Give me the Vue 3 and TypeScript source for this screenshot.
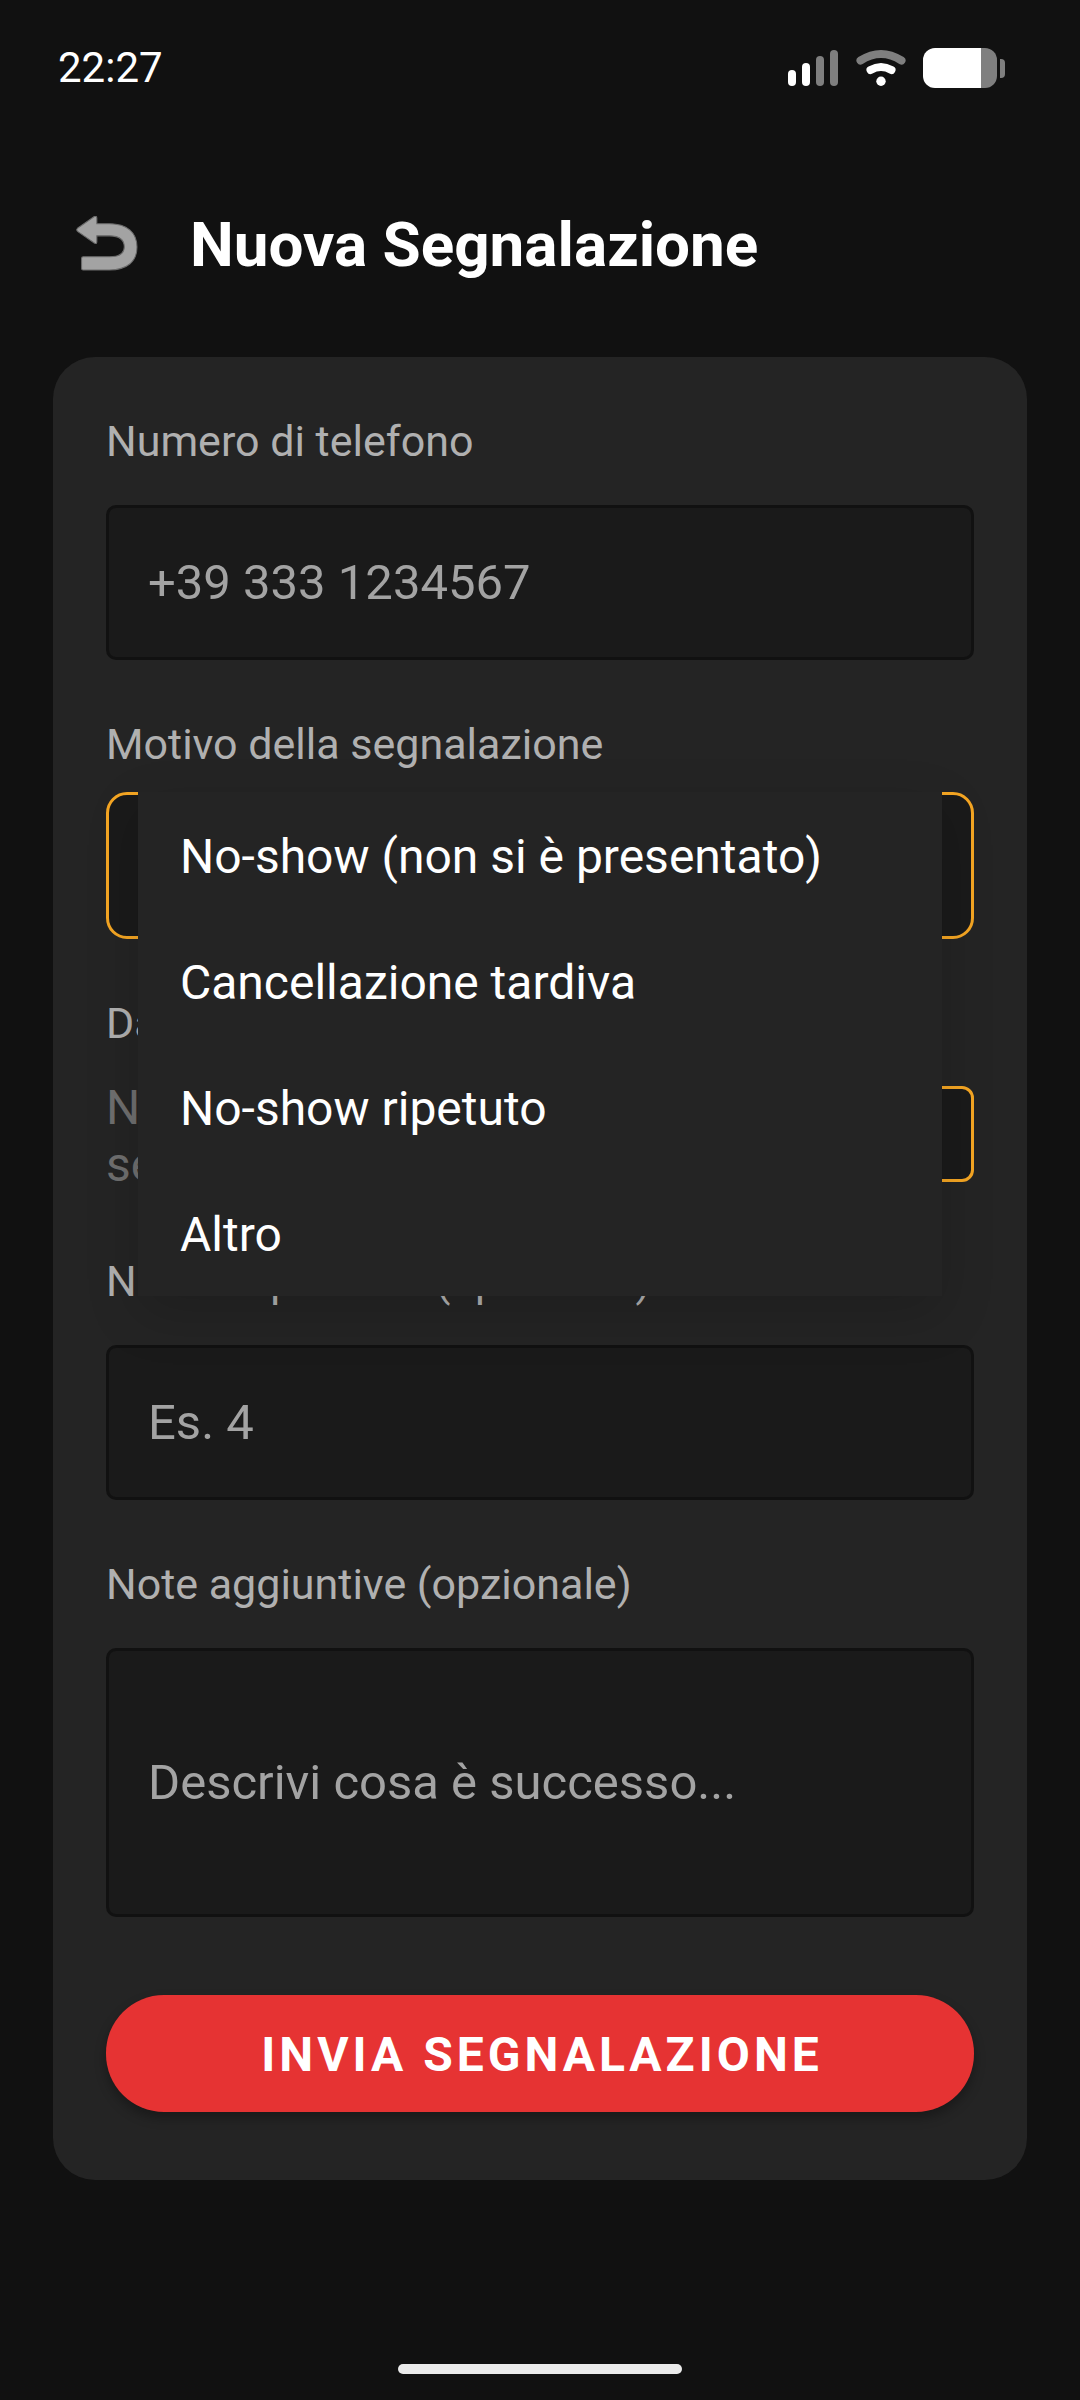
<script setup lang="ts">
import { ref } from 'vue'

const phone = ref('')
const reason = ref('')
const people = ref('')
const notes = ref('')
const menuOpen = ref(true)

const reasons: string[] = [
  'No-show (non si è presentato)',
  'Cancellazione tardiva',
  'No-show ripetuto',
  'Altro',
]

function choose(value: string) {
  reason.value = value
  menuOpen.value = false
}
</script>

<template>
  <div class="screen">
    <div class="status">
      <span class="clock">22:27</span>
      <div class="indicators">
        <svg class="signal" width="50" height="40" viewBox="0 0 50 40" aria-hidden="true">
          <rect x="0" y="22" width="8" height="16" rx="4" fill="#fff" />
          <rect x="14" y="15" width="8" height="23" rx="4" fill="#fff" />
          <rect x="28" y="8" width="8" height="30" rx="4" fill="#7f7f7f" />
          <rect x="42" y="2" width="8" height="36" rx="4" fill="#7f7f7f" />
        </svg>
        <svg class="wifi" width="50" height="40" viewBox="0 0 50 40" aria-hidden="true">
          <path d="M4.500 12.500Q25 -0.500 45.500 12.500" fill="none" stroke="#7f7f7f" stroke-width="8" stroke-linecap="round" />
          <path d="M14.500 22Q25 16 35.500 22" fill="none" stroke="#fff" stroke-width="8" stroke-linecap="round" />
          <circle cx="25" cy="33.300" r="4.700" fill="#fff" />
        </svg>
        <svg class="battery" width="82" height="40" viewBox="0 0 82 40" aria-hidden="true">
          <path d="M58 0H62A12 12 0 0 1 74 12V28A12 12 0 0 1 62 40H58Z" fill="#7f7f7f" />
          <path d="M58 0H12A12 12 0 0 0 0 12V28A12 12 0 0 0 12 40H58Z" fill="#fff" />
          <path d="M77 11H78Q82 11 82 15V26Q82 30 78 30H77Z" fill="#7f7f7f" />
        </svg>
      </div>
    </div>

    <header class="header">
      <button class="back" type="button" aria-label="Indietro">
        <svg width="62" height="56" viewBox="0 1 61 55" aria-hidden="true">
          <path
            d="M1.500 13L18 1.500Q20.500 0.500 20.500 3V8.500H33C50 8.500 60 17 60 31.500C60 46 50 54 33 54H7Q5.500 54 5.500 52.500V42.500Q5.500 41 7 41H33C43 41 47.500 38 47.500 31.500C47.500 24 43 20.500 33 20.500H20.500V26.500Q20.500 29 18 27.500L1.500 16Q0 14.500 1.500 13Z"
            fill="#a3a3a3"
            stroke="#6c6c6c"
            stroke-width="1"
          />
        </svg>
      </button>
      <h1 class="title">Nuova Segnalazione</h1>
    </header>

    <form class="card" @submit.prevent>
      <div class="group spaced">
        <label class="label" for="phone">Numero di telefono</label>
        <input id="phone" v-model="phone" class="field" type="tel" placeholder="+39 333 1234567" />
      </div>

      <div class="group">
        <label class="label" for="reason">Motivo della segnalazione</label>
        <div class="picker">
          <select id="reason" v-model="reason" class="select">
            <option v-for="item in reasons" :key="item" :value="item">{{ item }}</option>
          </select>
          <div v-if="menuOpen" class="menu">
            <button v-for="item in reasons" :key="item" class="option" type="button" @click="choose(item)">
              {{ item }}
            </button>
          </div>
        </div>
      </div>

      <div class="group">
        <span id="date-label" class="label">Data</span>
        <div class="date-row">
          <span class="date-value">Nessuna data selezionata</span>
          <button class="date-button" type="button" aria-labelledby="date-label"></button>
        </div>
      </div>

      <div class="group spaced">
        <label class="label" for="people">Numero persone (opzionale)</label>
        <input id="people" v-model="people" class="field" type="text" inputmode="numeric" placeholder="Es. 4" />
      </div>

      <div class="group spaced">
        <label class="label" for="notes">Note aggiuntive (opzionale)</label>
        <textarea id="notes" v-model="notes" class="field notes" placeholder="Descrivi cosa è successo..."></textarea>
      </div>

      <button class="submit" type="submit">INVIA SEGNALAZIONE</button>
    </form>

    <div class="home"><span class="home-bar"></span></div>
  </div>
</template>

<style>
body {
  margin: 0;
  background: #111;
}
</style>

<style scoped>
.screen {
  box-sizing: border-box;
  min-height: 100vh;
  display: flex;
  flex-direction: column;
  padding: 0 53px;
  background: #111;
  color: #fff;
  font-family: Roboto, 'Noto Sans', sans-serif;
}

.screen *,
.screen *::before {
  box-sizing: border-box;
}

button,
input,
select,
textarea {
  margin: 0;
  font-family: inherit;
}

.status {
  display: flex;
  align-items: center;
  justify-content: space-between;
  height: 136px;
  padding: 0 22px 0 5px;
}

.clock {
  font-size: 42px;
  line-height: 50px;
}

.indicators {
  display: flex;
  align-items: center;
}

.wifi {
  margin-left: 18px;
}

.battery {
  margin-left: 17px;
}

.header {
  display: flex;
  align-items: center;
  gap: 52px;
  height: 221px;
  padding: 0 23px 5px;
}

.back {
  display: flex;
  padding: 0;
  border: 0;
  background: none;
}

.title {
  margin: 0;
  padding-top: 2px;
  font-size: 62px;
  line-height: 74px;
  font-weight: 700;
}

.card {
  display: flex;
  flex-direction: column;
  gap: 60px;
  padding: 60px 53px 68px;
  border-radius: 42px;
  background: #242424;
}

.group {
  display: flex;
  flex-direction: column;
  gap: 24px;
}

.group.spaced {
  gap: 40px;
}

.label {
  color: #b0b0b0;
  font-size: 43px;
  line-height: 48px;
}

.field {
  display: block;
  width: 100%;
  height: 155px;
  padding: 0 39px;
  border: 3px solid #111;
  border-radius: 10px;
  outline: 0;
  background: #1a1a1a;
  color: #fff;
  font-size: 49px;
  line-height: 57px;
}

.field::placeholder {
  color: #a3a3a3;
  opacity: 1;
}

.notes {
  height: 269px;
  padding: 103px 39px;
  resize: none;
  overflow: hidden;
}

.picker {
  position: relative;
}

.select {
  display: block;
  width: 100%;
  height: 147px;
  border: 3px solid #f5a623;
  border-radius: 21px;
  outline: 0;
  background: #1a1a1a;
  color: #fff;
  font-size: 48px;
  appearance: none;
}

.menu {
  position: absolute;
  z-index: 1;
  top: 0;
  left: 32px;
  right: 32px;
  display: flex;
  flex-direction: column;
  background: #242424;
  box-shadow: 0 18px 50px rgba(0, 0, 0, 0.16);
}

.option {
  height: 126px;
  padding: 2px 42px 0;
  border: 0;
  background: none;
  color: #fff;
  font-size: 48px;
  line-height: 57px;
  text-align: left;
}

.date-row {
  display: flex;
  align-items: center;
  gap: 32px;
  min-height: 126px;
}

.date-value {
  flex: 1;
  padding-top: 4px;
  color: #6f6f6f;
  font-size: 48px;
  line-height: 57px;
}

.date-button {
  flex: 1;
  height: 96px;
  border: 3px solid #f5a623;
  border-radius: 12px;
  background: #1a1a1a;
}

.submit {
  height: 117px;
  margin-top: 18px;
  padding: 2px 0 0 4px;
  border: 0;
  border-radius: 58px;
  background: #e63333;
  box-shadow: 0 6px 12px rgba(0, 0, 0, 0.3);
  color: #fff;
  font-size: 48px;
  font-weight: 700;
  letter-spacing: 4px;
}

.home {
  display: flex;
  justify-content: center;
  margin-top: auto;
  padding: 26px 0;
}

.home-bar {
  width: 284px;
  height: 10px;
  border-radius: 5px;
  background: #ebebeb;
}
</style>
